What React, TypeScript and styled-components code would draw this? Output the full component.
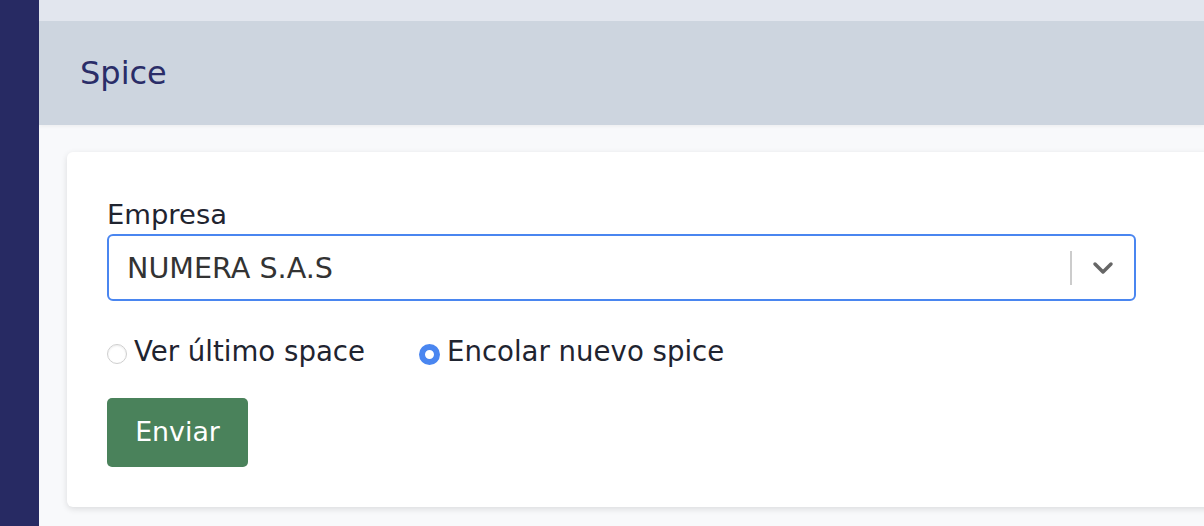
import React from "react";
import styled, { createGlobalStyle } from "styled-components";

const Global = createGlobalStyle`
  html, body { margin: 0; padding: 0; }
  body { font-family: "DejaVu Sans", "Noto Sans", sans-serif; background: #f8f9fb; }
  * { box-sizing: border-box; }
`;

const Shell = styled.div`
  display: flex;
  width: 1204px;
  height: 526px;
  overflow: hidden;
`;

const Sidebar = styled.aside`
  width: 39px;
  flex: none;
  background: #272a63;
`;

const Main = styled.main`
  flex: 1;
  display: flex;
  flex-direction: column;
  background: #f8f9fb;
  min-width: 0;
`;

const TopBar = styled.div`
  height: 21px;
  background: #e2e6ee;
`;

const Header = styled.header`
  height: 104px;
  background: #cdd5df;
  display: flex;
  align-items: center;
  padding-left: 41px;
  box-shadow: 0 2px 3px rgba(0, 0, 0, 0.04);
`;

const Title = styled.h1`
  margin: 0;
  font-weight: 400;
  font-size: 32px;
  line-height: 40px;
  color: #2a2d68;
  padding-bottom: 1px;
`;

const Content = styled.div`
  padding: 27px 0 0 28px;
`;

const Card = styled.section`
  width: 1200px;
  height: 355px;
  background: #fff;
  border-radius: 6px;
  box-shadow: 0 2px 6px rgba(0, 0, 0, 0.12);
  padding: 47px 40px 0;
`;

const Form = styled.form`
  width: 1029px;
  display: flex;
  flex-direction: column;
`;

const Label = styled.label`
  font-size: 27.4px;
  color: #1f2430;
  line-height: 32px;
  margin-bottom: 3px;
`;

const Select = styled.div`
  height: 67px;
  border: 2px solid #4a86f0;
  border-radius: 6px;
  display: flex;
  align-items: center;
  padding-left: 18px;
`;

const SelectValue = styled.span`
  flex: 1;
  font-size: 28.6px;
  color: #333;
`;

const Separator = styled.span`
  width: 2px;
  height: 34px;
  background: #cccccc;
`;

const Chevron = styled.span`
  width: 62px;
  display: flex;
  justify-content: center;
  align-items: center;
  color: #666;
`;

const RadioRow = styled.div`
  display: flex;
  gap: 54px;
  margin-top: 34px;
  align-items: center;
`;

const RadioItem = styled.label`
  display: flex;
  align-items: center;
  gap: 7px;
  font-size: 27.6px;
  line-height: 34px;
  color: #1f2430;
`;

const RadioDot = styled.span<{ $checked?: boolean }>`
  width: 20px;
  height: 20px;
  flex: none;
  border-radius: 50%;
  margin-top: 4px;
  ${(p) =>
    p.$checked
      ? `width: 21px; height: 21px; background: #fff; border: 6px solid #4a86f0;`
      : `background: #fff; border: 1px solid #cfcfcf; box-shadow: inset 0 1px 2px rgba(0,0,0,0.08);`}
`;

const Button = styled.button`
  margin-top: 29px;
  width: 141px;
  height: 69px;
  border: none;
  border-radius: 5px;
  background: #4a825b;
  color: #fff;
  font-family: inherit;
  font-size: 26.8px;
  cursor: pointer;
  padding: 0 0 2px;
`;

export default function App() {
  return (
    <>
      <Global />
      <Shell>
        <Sidebar />
        <Main>
          <TopBar />
          <Header>
            <Title>Spice</Title>
          </Header>
          <Content>
            <Card>
              <Form onSubmit={(e) => e.preventDefault()}>
                <Label>Empresa</Label>
                <Select>
                  <SelectValue>NUMERA S.A.S</SelectValue>
                  <Separator />
                  <Chevron>
                    <svg width="22" height="14" viewBox="0 0 22 14">
                      <path d="M3 3 L11 11 L19 3" fill="none" stroke="#666" strokeWidth="3.5" strokeLinecap="round" strokeLinejoin="round" />
                    </svg>
                  </Chevron>
                </Select>
                <RadioRow>
                  <RadioItem>
                    <RadioDot />
                    Ver último space
                  </RadioItem>
                  <RadioItem>
                    <RadioDot $checked />
                    Encolar nuevo spice
                  </RadioItem>
                </RadioRow>
                <div>
                  <Button type="submit">Enviar</Button>
                </div>
              </Form>
            </Card>
          </Content>
        </Main>
      </Shell>
    </>
  );
}
